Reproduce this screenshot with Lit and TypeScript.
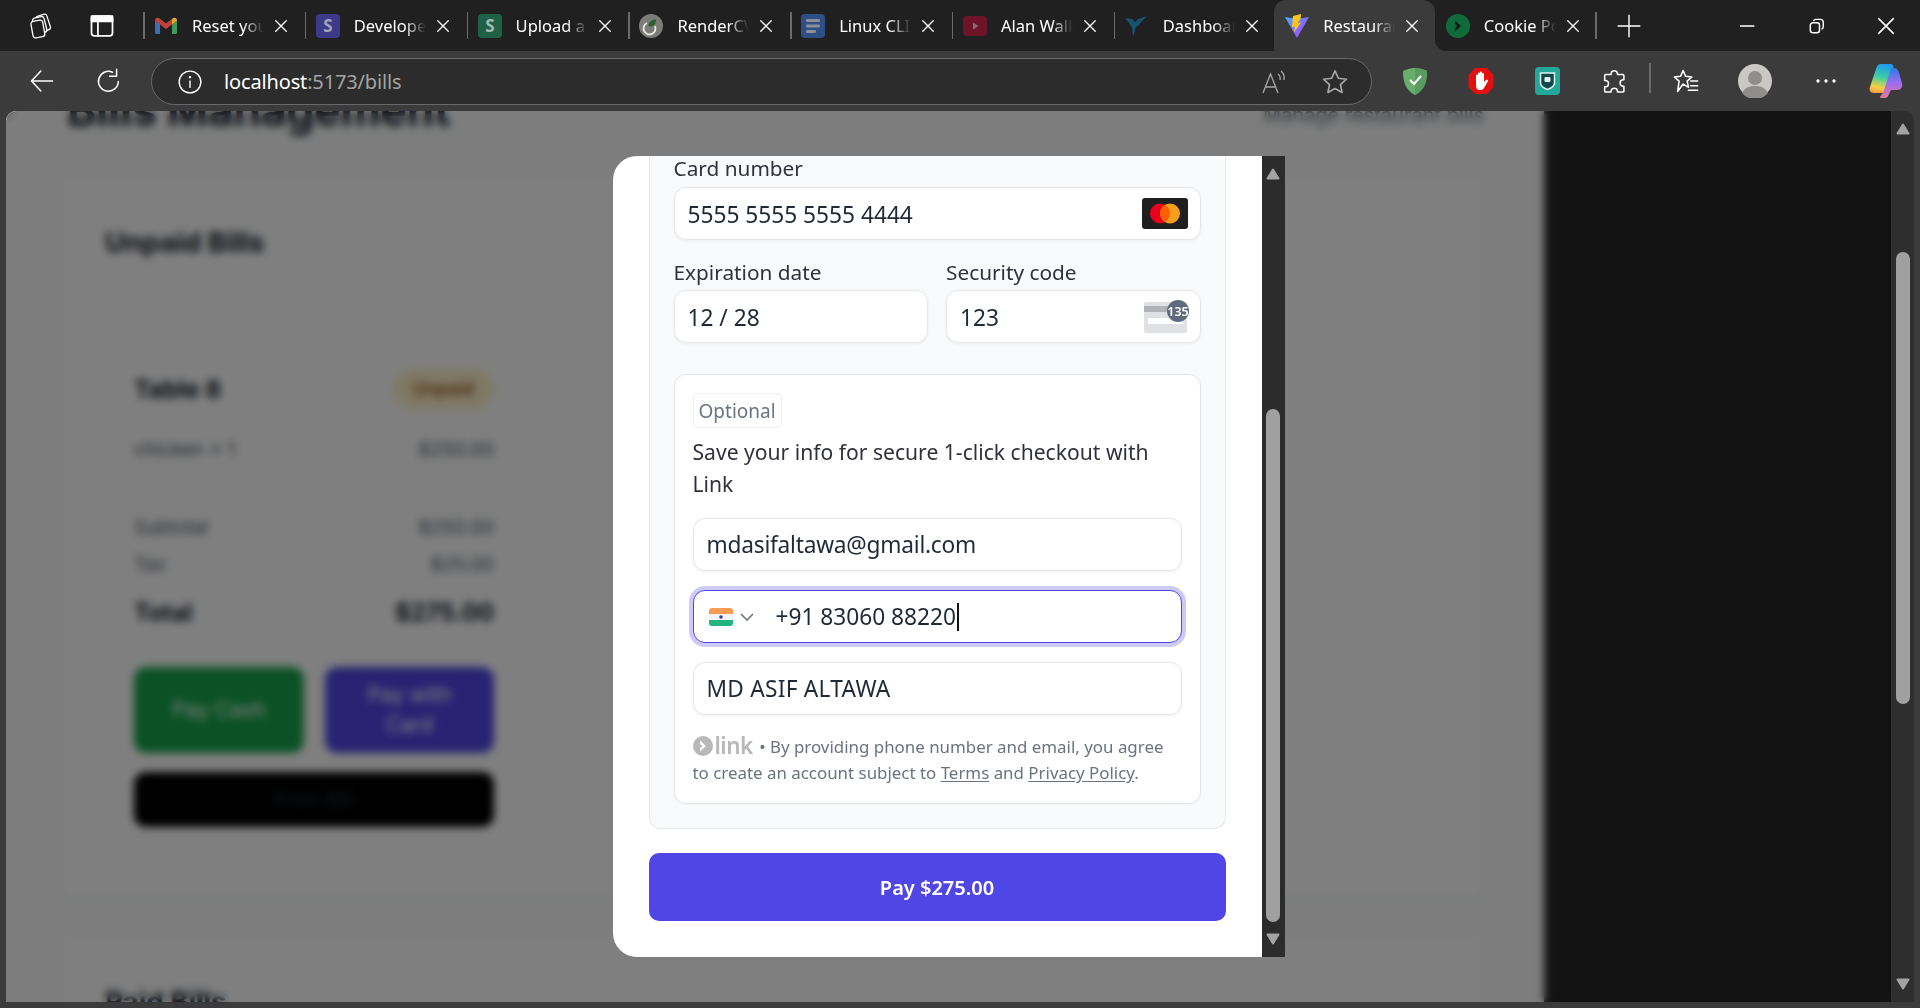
import { LitElement, html, css, svg } from "lit";
import { customElement, property } from "lit/decorators.js";

const UI_FONT = css`"Noto Sans", "Open Sans", sans-serif`;

const favicons = {
  gmail: svg`<svg width="24" height="24" viewBox="0 0 24 24"><path d="M1 20V6l5 4v10H2.500A1.500 1.500 0 0 1 1 18.500z" fill="#3b6fb5"/><path d="M23 20V6l-5 4v10h3.500A1.500 1.500 0 0 0 23 18.500z" fill="#3f9a5a"/><path d="M1 6.500C1 4 3.500 3 5.200 4.300L12 9.500l6.800-5.200C20.500 3 23 4 23 6.500L18 10.500l-6 4.500-6-4.500z" fill="#c4403a"/><path d="M18 4.900l1-.7C20.700 3 23 4 23 6.500L18 10.500z" fill="#d9a92f"/></svg>`,
  stripeBlue: svg`<svg width="24" height="24" viewBox="0 0 24 24"><rect width="24" height="24" rx="4" fill="#3d3a8a"/><text x="12" y="18" font-size="17" font-weight="700" text-anchor="middle" fill="#a3a3b3" font-family="Noto Sans, sans-serif">S</text></svg>`,
  stripeGreen: svg`<svg width="24" height="24" viewBox="0 0 24 24"><rect width="24" height="24" rx="4" fill="#1e6147"/><text x="12" y="18" font-size="17" font-weight="700" text-anchor="middle" fill="#a8b8b0" font-family="Noto Sans, sans-serif">S</text></svg>`,
  overleaf: svg`<svg width="24" height="24" viewBox="0 0 24 24"><circle cx="12" cy="12" r="12" fill="#7c7d78"/><path d="M8 9a6 6 0 1 0 8 3" fill="none" stroke="#e8e8e4" stroke-width="1.800"/><path d="M9.500 12c0-4 3-6.500 7.500-6.500 0 4.500-2.500 7-6 7z" fill="#2a5f33"/></svg>`,
  doc: svg`<svg width="24" height="24" viewBox="0 0 24 24"><rect width="24" height="24" rx="4" fill="#2e4f85"/><rect x="5" y="5" width="14" height="3" rx="1" fill="#8a8f98"/><rect x="5" y="10.500" width="14" height="3" rx="1" fill="#8a8f98"/><rect x="5" y="16" width="10" height="3" rx="1" fill="#8a8f98"/></svg>`,
  youtube: svg`<svg width="24" height="24" viewBox="0 0 24 24"><rect y="2" width="24" height="20" rx="4" fill="#6e1428"/><path d="M10 8.500l5.500 3.500-5.500 3.500z" fill="#8d6a72"/></svg>`,
  bird: svg`<svg width="24" height="24" viewBox="0 0 24 24"><path d="M0 4l7 1 3 3 3-3 9-3-5 5-3 4-3 2-3 10-1-9-3-5z" fill="#17526f"/></svg>`,
  vite: svg`<svg width="26" height="26" viewBox="0 0 26 26"><defs><linearGradient id="vt" x1="0" y1="0" x2="1" y2="1"><stop offset="0" stop-color="#41b0ff"/><stop offset="1" stop-color="#bd34fe"/></linearGradient></defs><path d="M1 4l12 2 12-2-12 21z" fill="url(#vt)"/><path d="M17 1l-8 2-1 11 3-.6-1 6 7-10-3.500.6 3-4z" fill="#ffc517"/></svg>`,
  cookie: svg`<svg width="24" height="24" viewBox="0 0 24 24"><circle cx="12" cy="12" r="12" fill="#0f6b3a"/><path d="M9 6.500l6 5.500-6 5.500V14l2.500-2L9 10z" fill="#0b1a10"/></svg>`,
};

type Tab = { title: string; icon: keyof typeof favicons; active?: boolean; short?: boolean };

const TABS: Tab[] = [
  { title: "Reset your password", icon: "gmail" },
  { title: "Developer Dashboard", icon: "stripeBlue" },
  { title: "Upload a file", icon: "stripeGreen" },
  { title: "RenderCV Editor", icon: "overleaf" },
  { title: "Linux CLI notes", icon: "doc" },
  { title: "Alan Walker", icon: "youtube" },
  { title: "Dashboard", icon: "bird", short: true },
  { title: "Restaurant", icon: "vite", active: true, short: true },
  { title: "Cookie Policy", icon: "cookie", short: true },
];

const stroke = (w = 24, content: unknown, sw = 1.5) =>
  html`<svg width=${w} height=${w} viewBox="0 0 24 24" fill="none" stroke="#fff" stroke-width=${sw} stroke-linecap="round" stroke-linejoin="round">${content}</svg>`;

@customElement("fake-scrollbar")
export class FakeScrollbar extends LitElement {
  @property({ type: Number }) thumbTop = 0;
  @property({ type: Number }) thumbHeight = 0;

  static styles = css`
    :host {
      display: flex;
      flex-direction: column;
      align-items: center;
      justify-content: space-between;
      width: 23px;
      background: #2c2c2c;
      padding: 12px 0;
      box-sizing: border-box;
    }
    svg {
      flex: none;
      display: block;
    }
    .track {
      flex: 1;
      width: 14px;
    }
    .thumb {
      width: 14px;
      background: #a0a0a0;
      border-radius: 7px;
    }
  `;

  render() {
    return html`
      <svg width="14" height="12" viewBox="0 0 14 12"><path d="M7 1.500L1.500 10.500h11z" fill="#a3a3a3" stroke="#a3a3a3" stroke-width="2" stroke-linejoin="round" /></svg>
      <div class="track">
        <div class="thumb" style="margin-top:${this.thumbTop}px;height:${this.thumbHeight}px"></div>
      </div>
      <svg width="14" height="12" viewBox="0 0 14 12"><path d="M7 10.500L1.500 1.500h11z" fill="#a3a3a3" stroke="#a3a3a3" stroke-width="2" stroke-linejoin="round" /></svg>
    `;
  }
}

@customElement("browser-chrome")
export class BrowserChrome extends LitElement {
  static styles = css`
    :host {
      display: block;
      font-family: ${UI_FONT};
    }
    .strip {
      display: flex;
      align-items: stretch;
      height: 51px;
      background: #202020;
      color: #fff;
    }
    .start {
      display: flex;
      align-items: center;
      gap: 15px;
      width: 143px;
      box-sizing: border-box;
      padding-left: 15px;
    }
    .slot {
      display: flex;
      align-items: center;
      justify-content: center;
      width: 48px;
    }
    .tab {
      position: relative;
      display: flex;
      align-items: center;
      width: 161.800px;
      box-sizing: border-box;
      font-size: 16.500px;
      flex: none;
    }
    .tab.short {
      width: 160.500px;
    }
    .tab::before {
      content: "";
      position: absolute;
      left: 0;
      top: 12px;
      bottom: 12px;
      width: 1.500px;
      background: #6b6b6b;
    }
    .tab.active {
      background: #3b3b3b;
      border-radius: 12px 12px 0 0;
    }
    .tab.active::before,
    .tab.after-active::before {
      display: none;
    }
    .tab.active::after {
      content: "";
      position: absolute;
      right: -12px;
      bottom: 0;
      width: 12px;
      height: 12px;
      background: radial-gradient(circle at 100% 0, transparent 12px, #3b3b3b 12.500px);
    }
    .fav {
      display: flex;
      align-items: center;
      justify-content: center;
      width: 26px;
      margin-left: 10px;
      margin-right: 13px;
    }
    .name {
      width: 72px;
      overflow: hidden;
      white-space: nowrap;
      -webkit-mask-image: linear-gradient(to right, #000 70%, transparent 100%);
      mask-image: linear-gradient(to right, #000 70%, transparent 100%);
    }
    .close {
      display: flex;
      margin-left: 8px;
    }
    .plus {
      display: flex;
      align-items: center;
      justify-content: center;
      width: 66px;
      border-left: 1.500px solid transparent;
      position: relative;
    }
    .plus::before {
      content: "";
      position: absolute;
      left: -1px;
      top: 12px;
      bottom: 12px;
      width: 1.500px;
      background: #6b6b6b;
    }
    .window {
      display: flex;
      margin-left: auto;
    }
    .window div {
      display: flex;
      align-items: center;
      justify-content: center;
      width: 69px;
    }
    .toolbar {
      display: flex;
      align-items: center;
      height: 60px;
      background: #3b3b3b;
      padding-left: 8px;
    }
    .nav {
      display: flex;
      align-items: center;
      justify-content: center;
      width: 67px;
    }
    .nav.reload {
      margin-right: 9px;
    }
    .address {
      display: flex;
      align-items: center;
      width: 1221px;
      height: 47px;
      box-sizing: border-box;
      margin-top: 1px;
      border: 1.500px solid #696969;
      border-radius: 24px;
      background: #2c2c2c;
      padding: 0 22px 0 25px;
    }
    .url {
      margin-left: 21px;
      font-size: 20px;
      color: #a3a3a3;
      letter-spacing: -0.150px;
    }
    .url b {
      font-weight: 400;
      color: #fff;
    }
    .address-end {
      display: flex;
      gap: 32px;
      margin-left: auto;
    }
    .ext {
      display: flex;
      align-items: center;
      justify-content: center;
      width: 66.400px;
      flex: none;
    }
    .exts {
      display: flex;
      margin-left: 9.500px;
    }
    .sep {
      width: 2px;
      height: 30px;
      background: #6b6b6b;
      margin: 0 1px 0 2px;
      flex: none;
    }
    .wide {
      width: 68.500px;
    }
    .dots {
      width: 73.500px;
    }
    .last {
      width: 46px;
    }
  `;

  private renderStrip() {
    return html`
      <div class="strip">
        <div class="start">
          <div class="slot">
            <svg width="26" height="26" viewBox="0 0 24 24" fill="#202020" stroke="#fff" stroke-width="1.200" stroke-linejoin="round">
              <rect x="10" y="2" width="11" height="15" rx="2.500" transform="rotate(-18 15 9)" />
              <rect x="7" y="4" width="11" height="15" rx="2.500" transform="rotate(-14 12 11)" />
              <rect x="5.500" y="7" width="11" height="15.500" rx="2.500" transform="rotate(-10 11 15)" />
            </svg>
          </div>
          <div class="slot">
            ${stroke(28, svg`<rect x="3" y="3.500" width="18" height="17" rx="2.500"/><rect x="3" y="3.500" width="18" height="4.500" fill="#fff"/><path d="M8.500 8v12.500"/>`, 1.500)}
          </div>
        </div>
        ${TABS.map(
          (t, i) => html`
            <div class="tab ${t.active ? "active" : ""} ${t.short ? "short" : ""} ${i > 0 && TABS[i - 1].active ? "after-active" : ""}">
              <span class="fav">${favicons[t.icon]}</span>
              <span class="name">${t.title}</span>
              <span class="close">
                ${stroke(18, svg`<path d="M5 5l14 14M19 5L5 19"/>`, 1.800)}
              </span>
            </div>
          `,
        )}
        <div class="plus">${stroke(26, svg`<path d="M12 2v20M2 12h20"/>`, 1.300)}</div>
        <div class="window">
          <div>${stroke(20, svg`<path d="M3 12h16"/>`, 1.800)}</div>
          <div>${stroke(20, svg`<rect x="4" y="8" width="11" height="12" rx="3"/><path d="M8 5.500C8.500 4.500 9.500 4 10.500 4H16c2 0 3.500 1.500 3.500 3.500V13c0 1-.5 2-1.500 2.500"/>`, 1.700)}</div>
          <div>${stroke(22, svg`<path d="M4 4l16 16M20 4L4 20"/>`, 1.700)}</div>
        </div>
      </div>
    `;
  }

  private renderToolbar() {
    return html`
      <div class="toolbar">
        <div class="nav">${stroke(28, svg`<path d="M3 12h18M11 3.500L3 12l8 8.500"/>`, 1.300)}</div>
        <div class="nav reload">${stroke(28, svg`<path d="M20 12.500A8.500 8.500 0 1 1 15 4.500"/><path d="M18.500 2v6h-6"/>`, 1.300)}</div>
        <div class="address">
          ${stroke(26, svg`<circle cx="12" cy="12" r="10"/><path d="M12 11v6"/><circle cx="12" cy="7.500" r=".5" fill="#fff"/>`, 1.300)}
          <span class="url"><b>localhost</b>:5173/bills</span>
          <div class="address-end">
            <svg width="28" height="28" viewBox="0 0 28 28" fill="none" stroke="#a8a8a8" stroke-width="1.300"><path d="M2 25L9.500 6l7.500 19M4.500 19h10"/><path d="M17 6c2 1.500 2.500 3.500 2 6M20 3c3 2.500 3.500 6 3 9"/></svg>
            <svg width="28" height="28" viewBox="0 0 24 24" fill="none" stroke="#a8a8a8" stroke-width="1.400" stroke-linejoin="round"><path d="M12 2.500l2.900 6.300 6.900.8-5.100 4.600 1.400 6.800-6.100-3.400-6.100 3.400 1.400-6.800L2.200 9.600l6.900-.8z"/></svg>
          </div>
        </div>
        <div class="exts">
          <div class="ext">
            <svg width="24" height="28" viewBox="0 0 24 28"><path d="M12 1C7 1 3 2.500 0 4c0 10 2 19 12 24 10-5 12-14 12-24-3-1.500-7-3-12-3z" fill="#68ae6b"/><path d="M12 1c5 0 9 1.500 12 3 0 10-2 19-12 24z" fill="#5a9c60"/><path d="M7 13l4 4 7-8" fill="none" stroke="#fff" stroke-width="2"/></svg>
          </div>
          <div class="ext">
            <svg width="26" height="28" viewBox="0 0 26 28"><path d="M7 1h12l6.500 7v12L19 27H7L.5 20V8z" fill="#e2100f"/><path d="M8 13V8.500a1 1 0 0 1 2 0V12V6.500a1 1 0 0 1 2 0V12V5.500a1 1 0 0 1 2 0V12V7a1 1 0 0 1 2 0v8l2-2a1.200 1.200 0 0 1 1.800 1.600L16 21c-1 1.500-2 2-4 2-3 0-4-1.500-4-5z" fill="#fff"/></svg>
          </div>
          <div class="ext">
            <svg width="25" height="28" viewBox="0 0 25 28"><rect width="25" height="28" rx="4" fill="#23a79b"/><path d="M5.500 6h14v10c0 3-3 5-7 6.500-4-1.500-7-3.500-7-6.500z" fill="#0e4a48" stroke="#dff5f0" stroke-width="1.500"/><rect x="9.500" y="10" width="6" height="5" rx="1" fill="#dff5f0"/></svg>
          </div>
          <div class="ext">
            ${stroke(28, svg`<path d="M9.500 5.500a2.800 2.800 0 0 1 5.500 0V6.500h4.500a1 1 0 0 1 1 1V11h-1a2.800 2.800 0 0 0 0 5.500h1v4a1 1 0 0 1-1 1H15v-1a2.800 2.800 0 0 0-5.500 0v1H5a1 1 0 0 1-1-1V17h1a2.800 2.800 0 0 0 0-5.500H4V7.500a1 1 0 0 1 1-1h4.500z"/>`, 1.300)}
          </div>
          <div class="sep"></div>
          <div class="ext wide">
            ${stroke(28, svg`<path d="M9.500 3l2.200 5 5.300.5-4 3.600 1.200 5.300L9.500 14.600 4.800 21l1.300-8.900L2 8.500 7.300 8z"/><path d="M16 12h6M16 16h6M14 20h8"/>`, 1.300)}
          </div>
          <div class="ext wide">
            <svg width="34" height="34" viewBox="0 0 34 34"><circle cx="17" cy="17" r="17" fill="#c9c8c4"/><circle cx="17" cy="14" r="7" fill="#8f8e8a"/><path d="M4 29c3-6 8-7 13-7s10 1 13 7a17 17 0 0 1-26 0z" fill="#8f8e8a"/></svg>
          </div>
          <div class="ext dots">
            <svg width="22" height="6" viewBox="0 0 22 6" fill="#fff"><circle cx="3" cy="3" r="1.700"/><circle cx="11" cy="3" r="1.700"/><circle cx="19" cy="3" r="1.700"/></svg>
          </div>
          <div class="ext last">
            <svg width="34" height="36" viewBox="0 0 34 36"><defs><linearGradient id="cpa" x1="0.500" y1="0" x2="0.300" y2="1"><stop offset="0" stop-color="#1f9cf0"/><stop offset="0.450" stop-color="#3ed0a0"/><stop offset="0.800" stop-color="#f5d142"/><stop offset="1" stop-color="#f59a42"/></linearGradient><linearGradient id="cpb" x1="0.500" y1="0" x2="0.500" y2="1"><stop offset="0" stop-color="#2c7de8"/><stop offset="0.500" stop-color="#9c6cf0"/><stop offset="1" stop-color="#e8789c"/></linearGradient></defs><path d="M12 1h9c3 0 4 2 3 5l-5 18c-1 4-3 6-6 6H5C1 30 0 27 1 24l6-18c1-3 2-5 5-5z" fill="url(#cpa)"/><path d="M22 5h3c3 0 4 2 5 5l3 10c1 4-1 7-5 7h-6l-3 6c-1 2-2 2-4 2h-3c-3 0 2-4 3-8l6-18c.3-2 .5-3 1-4z" fill="url(#cpb)"/></svg>
          </div>
        </div>
      </div>
    `;
  }

  render() {
    return html`${this.renderStrip()}${this.renderToolbar()}`;
  }
}

@customElement("bills-page")
export class BillsPage extends LitElement {
  static styles = css`
    :host {
      display: flex;
      height: 100%;
      font-family: Inter, sans-serif;
      color: #111827;
    }
    .left {
      width: 1538px;
      background: #fafbfb;
      overflow: hidden;
      padding: 0 60px 0 55px;
      box-sizing: border-box;
      flex: none;
    }
    .right {
      flex: 1;
      background: #262626;
    }
    .head {
      display: flex;
      align-items: center;
      justify-content: space-between;
      margin-top: -28px;
      padding-left: 6px;
    }
    h1 {
      margin: 0;
      font-size: 44px;
      line-height: 54px;
      font-weight: 700;
    }
    .head span {
      font-size: 20px;
      color: #6b7280;
      margin-top: 10px;
    }
    .card {
      margin-top: 41px;
      background: #fff;
      border-radius: 12px;
      box-shadow: 0 1px 4px rgba(0, 0, 0, 0.08);
      padding: 43px 44px 44px;
    }
    .card + .card {
      margin-top: 39px;
    }
    h2 {
      margin: 0;
      font-size: 27.700px;
      line-height: 42px;
      font-weight: 700;
    }
    .bill {
      width: 417px;
      margin-top: 73px;
      box-sizing: border-box;
      border: 1px solid #f1f2f4;
      border-radius: 12px;
      padding: 32px 27px 26px 28px;
    }
    .row {
      display: flex;
      align-items: center;
      justify-content: space-between;
      font-size: 19px;
      line-height: 30px;
      color: #4b5563;
    }
    .title {
      font-size: 24.500px;
      line-height: 40px;
      font-weight: 700;
      color: #111827;
    }
    .badge {
      font-size: 18px;
      line-height: 40px;
      padding: 0 20px;
      border-radius: 20px;
      background: #fef3c7;
      color: #92400e;
      font-weight: 500;
    }
    .item {
      margin-top: 26px;
    }
    .sub {
      margin-top: 48px;
    }
    .tax {
      margin-top: 7px;
    }
    .total {
      margin-top: 13px;
      font-size: 24px;
      line-height: 40px;
      font-weight: 700;
      color: #111827;
    }
    .pay {
      display: grid;
      grid-template-columns: 1fr 1fr;
      gap: 21px;
      margin-top: 34px;
    }
    .btn {
      display: flex;
      align-items: center;
      justify-content: center;
      height: 86px;
      border-radius: 12px;
      color: #fff;
      font-size: 21px;
      line-height: 30px;
      text-align: center;
    }
    .green {
      background: #16a34a;
    }
    .blue {
      background: #4f46e5;
      padding: 0 30px;
    }
    .black {
      height: 55px;
      margin-top: 19px;
      background: #000;
      color: #1f2937;
    }
  `;

  render() {
    return html`
      <div class="left">
        <div class="head"><h1>Bills Management</h1><span>Manage restaurant bills</span></div>
        <section class="card">
          <h2>Unpaid Bills</h2>
          <div class="bill">
            <div class="row title">Table 8 <span class="badge">Unpaid</span></div>
            <div class="row item"><span>chicken × 1</span><span>$250.00</span></div>
            <div class="row sub"><span>Subtotal</span><span>$250.00</span></div>
            <div class="row tax"><span>Tax</span><span>$25.00</span></div>
            <div class="row total"><span>Total</span><span>$275.00</span></div>
            <div class="pay">
              <div class="btn green">Pay Cash</div>
              <div class="btn blue">Pay with Card</div>
            </div>
            <div class="btn black">Print Bill</div>
          </div>
        </section>
        <section class="card"><h2>Paid Bills</h2></section>
      </div>
      <div class="right"></div>
    `;
  }
}

@customElement("payment-modal")
export class PaymentModal extends LitElement {
  static styles = css`
    :host {
      display: flex;
      width: 672px;
      height: 801px;
      font-family: ${UI_FONT};
      color: #30313d;
    }
    .body {
      flex: 1;
      min-width: 0;
      background: #fff;
      border-radius: 24px 0 0 24px;
      padding: 0 36px;
      box-sizing: border-box;
      overflow: hidden;
    }
    .panel {
      height: 673px;
      box-sizing: border-box;
      background: #f9fafb;
      border: 1px solid #e5e7eb;
      border-top: none;
      border-radius: 0 0 12px 12px;
      padding: 0 24px 24px;
    }
    label {
      display: block;
      font-size: 20.800px;
      line-height: 24px;
      margin-bottom: 6px;
    }
    label.first {
      margin-bottom: 7px;
    }
    .input {
      display: flex;
      align-items: center;
      justify-content: space-between;
      height: 53px;
      box-sizing: border-box;
      background: #fff;
      border: 1px solid #e6e6e6;
      border-radius: 12px;
      box-shadow: 0 1px 3px rgba(0, 0, 0, 0.06);
      padding: 0 12px 0 13px;
      font-size: 22.700px;
      color: #1f2937;
    }
    .card-input {
      padding-top: 2px;
    }
    .card-input svg {
      margin-top: -2px;
    }
    .row {
      display: grid;
      grid-template-columns: 254.500px 254.500px;
      justify-content: space-between;
      margin-top: 20px;
    }
    .save {
      margin-top: 31px;
      background: #fff;
      border: 1px solid #e6e6e6;
      border-radius: 12px;
      box-shadow: 0 1px 3px rgba(0, 0, 0, 0.04);
      padding: 18px 18px 17px;
    }
    .optional {
      display: inline-block;
      height: 35px;
      box-sizing: border-box;
      border: 1px solid #eeeff1;
      border-radius: 5px;
      padding: 0 5px;
      font-size: 19px;
      line-height: 35px;
      color: #6b7280;
      vertical-align: top;
    }
    .save p {
      margin: 8px 0 18px;
      font-size: 21.100px;
      line-height: 32px;
      color: #30313d;
    }
    .stack {
      display: flex;
      flex-direction: column;
      gap: 19px;
    }
    .email {
      letter-spacing: -0.220px;
    }
    .name {
      letter-spacing: 0.250px;
    }
    .focus {
      justify-content: flex-start;
      border: 1.500px solid #4f46e5;
      box-shadow: 0 0 0 4px #cdcbf6;
      padding-left: 15px;
    }
    .chev {
      margin-left: 6px;
      margin-right: 21px;
      display: flex;
    }
    .caret {
      width: 2px;
      height: 28px;
      background: #111;
      margin-left: 1px;
    }
    .terms {
      margin-top: 18px;
      font-size: 16.900px;
      line-height: 26px;
      color: #6b7280;
      white-space: nowrap;
    }
    .mark {
      display: inline-flex;
      align-items: center;
      vertical-align: -3px;
      gap: 2px;
      margin-right: 2px;
      height: 26px;
    }
    .word {
      font-size: 22.500px;
      line-height: 24px;
      font-weight: 600;
      color: #b8b8b8;
      letter-spacing: -0.500px;
    }
    .terms u {
      text-underline-offset: 2px;
    }
    .submit {
      display: flex;
      align-items: center;
      justify-content: center;
      height: 68px;
      margin-top: 24px;
      background: #4f46e5;
      border-radius: 10px;
      color: #fff;
      font-size: 20px;
      font-weight: 600;
    }
  `;

  render() {
    return html`
      <div class="body">
        <div class="panel">
          <label class="first">Card number</label>
          <div class="input card-input">
            5555 5555 5555 4444
            <svg width="46" height="31" viewBox="0 0 46 31">
              <rect width="46" height="31" rx="3" fill="#1f1f1f" />
              <circle cx="18" cy="15.500" r="10" fill="#eb001b" />
              <circle cx="28" cy="15.500" r="10" fill="#f79e1b" />
              <path d="M23 6.900a10 10 0 0 1 0 17.200 10 10 0 0 1 0-17.200z" fill="#ff5f00" />
            </svg>
          </div>
          <div class="row">
            <div>
              <label>Expiration date</label>
              <div class="input card-input">12 / 28</div>
            </div>
            <div>
              <label>Security code</label>
              <div class="input card-input">
                123
                <svg width="46" height="35" viewBox="0 0 46 35" style="margin-right:-1px">
                  <rect x="1" y="3" width="43" height="31" rx="2" fill="#dfe1e5" />
                  <rect x="1" y="7" width="43" height="6" fill="#b0b3b8" />
                  <rect x="5" y="19" width="35" height="6" fill="#fff" />
                  <circle cx="35" cy="12" r="11" fill="#5f6b7c" />
                  <text x="35" y="16.500" font-size="12.500" font-weight="600" text-anchor="middle" fill="#fff" font-family="Noto Sans, sans-serif">135</text>
                </svg>
              </div>
            </div>
          </div>
          <div class="save">
            <span class="optional">Optional</span>
            <p>Save your info for secure 1-click checkout with Link</p>
            <div class="stack">
              <div class="input email">mdasifaltawa@gmail.com</div>
              <div class="input focus">
                <svg width="24" height="18" viewBox="0 0 24 18">
                  <rect width="24" height="18" rx="3" fill="#f4f6f9" />
                  <path d="M0 6V3a3 3 0 0 1 3-3h18a3 3 0 0 1 3 3v3z" fill="#f79a55" />
                  <path d="M0 12v3a3 3 0 0 0 3 3h18a3 3 0 0 0 3-3v-3z" fill="#22b57f" />
                  <circle cx="12" cy="9" r="1.800" fill="#3b3f9f" />
                </svg>
                <span class="chev">
                  <svg width="16" height="16" viewBox="0 0 16 16" fill="none" stroke="#6b7280" stroke-width="1.600"><path d="M2 5l6 6 6-6" /></svg>
                </span>
                +91 83060 88220<span class="caret"></span>
              </div>
              <div class="input name">MD ASIF ALTAWA</div>
            </div>
            <div class="terms">
              <span class="mark">
                <svg width="20" height="20" viewBox="0 0 20 20">
                  <circle cx="10" cy="10" r="10" fill="#b8b8b8" />
                  <path d="M7 4.500l6 5.500-6 5.500V12l2.500-2L7 8z" fill="#fff" />
                </svg>
                <span class="word">link</span>
              </span>
              • By providing phone number and email, you agree<br />to create an account subject to <u>Terms</u> and <u>Privacy Policy</u>.
            </div>
          </div>
        </div>
        <div class="submit">Pay $275.00</div>
      </div>
      <fake-scrollbar thumbTop=${229} thumbHeight=${513}></fake-scrollbar>
    `;
  }
}

@customElement("app-root")
export class AppRoot extends LitElement {
  static styles = css`
    :host {
      display: flex;
      flex-direction: column;
      width: 100%;
      height: 100vh;
      background: #3b3b3b;
    }
    .frame {
      flex: 1;
      min-height: 0;
      display: flex;
      margin: 0 6px 6px 6px;
      border-radius: 10px 10px 0 0;
      overflow: hidden;
    }
    .viewport {
      position: relative;
      flex: 1;
      min-width: 0;
    }
    .overlay {
      position: absolute;
      inset: 0;
      display: flex;
      align-items: center;
      justify-content: center;
      background: rgba(0, 0, 0, 0.5);
      backdrop-filter: blur(4px);
    }
    .frame > fake-scrollbar {
      background: #2e2e2e;
    }
  `;

  render() {
    return html`
      <browser-chrome></browser-chrome>
      <div class="frame">
        <div class="viewport">
          <bills-page></bills-page>
          <div class="overlay"><payment-modal></payment-modal></div>
        </div>
        <fake-scrollbar thumbTop=${117} thumbHeight=${452}></fake-scrollbar>
      </div>
    `;
  }
}
